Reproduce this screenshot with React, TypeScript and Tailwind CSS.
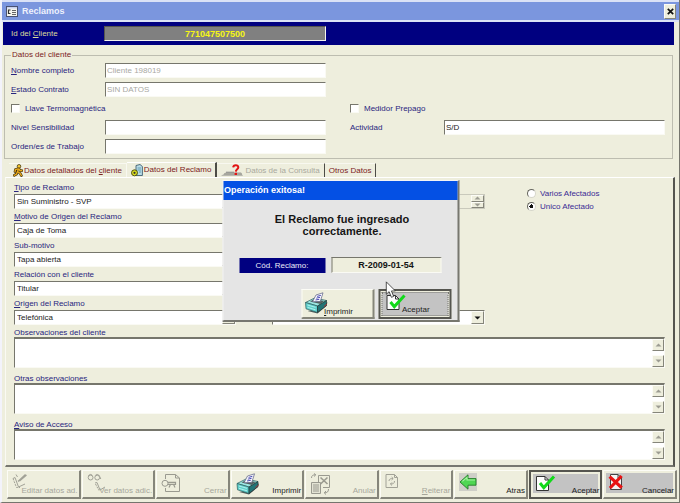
import type { ReactNode } from "react";

const SUNKEN =
  "border border-t-[#76766c] border-l-[#76766c] border-b-[#fafaf4] border-r-[#fafaf4]";
const RAISED =
  "border border-t-[#fcfcf6] border-l-[#fcfcf6] border-b-[#85857a] border-r-[#85857a]";

/* Text with one underlined mnemonic letter, marked by "&". */
function Mnemonic({ text }: { text: string }) {
  const at = text.indexOf("&");
  if (at < 0) return <>{text}</>;
  return (
    <>
      {text.slice(0, at)}
      <span className="underline">{text[at + 1]}</span>
      {text.slice(at + 2)}
    </>
  );
}

function WindowIcon() {
  return (
    <svg width="12" height="11" viewBox="0 0 12 11">
      <rect x="0.5" y="0.5" width="11" height="10" fill="#f4f4ee" stroke="#4a5272" />
      <rect x="1" y="1" width="10" height="1.5" fill="#c9d2ee" />
      <path d="M4.5 4H2.5V7.5H4.5" fill="none" stroke="#333" strokeWidth="1.2" />
      <path d="M6 4.5H10M6 6.5H10M6 8.5H10" stroke="#555" strokeWidth="0.9" />
    </svg>
  );
}

function RunnerIcon() {
  return (
    <svg width="10" height="13" viewBox="0 0 10 13">
      <path d="M6 4L4.5 7.5M5.8 4.6L2.5 5.5L2 7.5M5.8 4.6L7 6.8L8.8 6.5M4.5 7.5L3.5 10L1.2 11.3M4.5 7.5L7 9.2L8.4 11.6" fill="none" stroke="#3a2b08" strokeWidth="2.6" strokeLinecap="round" />
      <path d="M6 4L4.5 7.5M5.8 4.6L2.5 5.5L2 7.5M5.8 4.6L7 6.8L8.8 6.5M4.5 7.5L3.5 10L1.2 11.3M4.5 7.5L7 9.2L8.4 11.6" fill="none" stroke="#e9a91c" strokeWidth="1.4" strokeLinecap="round" />
      <circle cx="6" cy="2.3" r="1.8" fill="#f3c52e" stroke="#3a2b08" strokeWidth="0.7" />
    </svg>
  );
}

function ClaimIcon() {
  return (
    <svg width="12" height="13" viewBox="0 0 12 13">
      <path d="M5 1.5L9 0.5L11.4 2.5V11.5H5Z" fill="#b9dce6" stroke="#3f5f72" strokeWidth="0.9" />
      <path d="M6.5 4H10M6.5 6H10M8 8H10" stroke="#4c8aa4" strokeWidth="0.8" />
      <circle cx="3.5" cy="8.8" r="3" fill="#d9dc1c" stroke="#43450b" strokeWidth="0.9" />
      <circle cx="3.5" cy="8.8" r="1.1" fill="#333" />
    </svg>
  );
}

function QueryIcon() {
  return (
    <svg width="23" height="13" viewBox="0 0 23 13">
      <path d="M5 8.2H20L22 12H0Z" fill="#b9b9b0" />
      <path d="M3 10H21" stroke="#8b8b84" strokeWidth="0.8" />
      <path d="M5 8.2H13" stroke="#777" strokeWidth="0.8" />
      <path d="M12.2 3.4C12.4 0.6 17.4 0.5 17.3 3.4C17.2 5.3 14.9 5.1 14.8 7.6" fill="none" stroke="#e21414" strokeWidth="2" />
      <rect x="13.6" y="8.8" width="2.4" height="2.2" fill="#e21414" />
    </svg>
  );
}

function PrinterIcon() {
  return (
    <svg width="24" height="22" viewBox="0 0 24 22">
      <path d="M3 19L13 21.5L22 14L23 10L18 16Z" fill="#55605f" />
      <path d="M1 10.5L10 6L22 8.5L13 14Z" fill="#9be6e2" stroke="#2d5b5b" strokeWidth="0.7" />
      <path d="M1 10.5L13 14V20.5L1.5 16.8Z" fill="#5fd0cc" stroke="#2d5b5b" strokeWidth="0.7" />
      <path d="M13 14L22 8.5V13.5L13 20.5Z" fill="#237476" stroke="#233" strokeWidth="0.7" />
      <path d="M3 13L11 15.3M3 15.4L11 17.8" stroke="#c6f7f4" strokeWidth="0.8" />
      <path d="M5.5 9.5L16 12L19.5 9L10 7Z" fill="#54615f" />
      <path d="M8 9.8L11.5 3L18.5 0.8L15.8 9.4Z" fill="#fbfbff" stroke="#565a80" strokeWidth="0.7" />
      <path d="M12.6 4.4L16.4 3.3M11.8 6.2L15.6 5.3M11 8L14.8 7.3" stroke="#4b4bb4" strokeWidth="1" />
      <path d="M19.5 14.5L22.5 12" stroke="#a33" strokeWidth="1" />
    </svg>
  );
}

function CheckDocIcon() {
  return (
    <svg width="21" height="18" viewBox="0 0 21 18">
      <path d="M1.5 2.5H10L13.5 6V16.5H1.5Z" fill="#fdfdfd" stroke="#333" />
      <path d="M10 2.5V6H13.5" fill="none" stroke="#333" />
      <path d="M5 9L8.8 13.6L19 2.5" fill="none" stroke="#12d91a" strokeWidth="3" />
    </svg>
  );
}

function CrossDocIcon() {
  return (
    <svg width="16" height="18" viewBox="0 0 16 18">
      <path d="M2.5 1.5H10L13.5 5V16.5H2.5Z" fill="#f4f4f4" stroke="#444" />
      <path d="M10 1.5V5H13.5" fill="none" stroke="#444" />
      <path d="M1.6 3.6L13.8 14.8M13.6 3L2 15" stroke="#e81313" strokeWidth="3.2" />
    </svg>
  );
}

function BackArrowIcon() {
  return (
    <svg width="18" height="18" viewBox="0 0 18 18">
      <rect width="18" height="18" fill="#cfcfc8" />
      <path d="M1 9L9 1.8V5.6H17V12.2H9V16.2Z" fill="#4fd653" stroke="#237a28" strokeWidth="0.9" />
      <path d="M3.4 8.4L8 4.4V7H16" fill="none" stroke="#a6f2a2" strokeWidth="1.1" />
    </svg>
  );
}

function EditIcon() {
  return (
    <svg width="18" height="16" viewBox="0 0 18 16" fill="none" stroke="#a2a297">
      <path d="M1 5.5L3 4.5L6.5 14L13 11" />
      <path d="M1 5.5L4.5 14.5H8" strokeDasharray="2 1" />
      <path d="M6 8.5L13.5 1.5M7.5 8L14.5 2" strokeWidth="1.3" />
      <path d="M4 1.5L5.5 4" />
    </svg>
  );
}

function GlassesIcon() {
  return (
    <svg width="20" height="19" viewBox="0 0 20 19" fill="none" stroke="#a2a297">
      <circle cx="3.6" cy="4.6" r="2.4" />
      <circle cx="10.2" cy="4.6" r="2.4" />
      <path d="M1.4 3.2C2 1 4.6 1 5.4 2.4M8.4 2.4C9 1 11.8 1 12.6 3.4L13.8 6" />
      <path d="M8 10L10 9.5L13 17L18 14" />
      <path d="M8.5 11L12 17.5" strokeDasharray="2 1" />
    </svg>
  );
}

function CloseDocIcon() {
  return (
    <svg width="20" height="20" viewBox="0 0 20 20" fill="none" stroke="#9a9a90">
      <path d="M4.5 6V1.5H14.5L18.5 5V18.5H4.5V15" />
      <path d="M14.5 1.5V5H18.5" />
      <circle cx="4" cy="10.3" r="3" />
      <path d="M7 9.3H14.5V11.3H7M9.5 11.3L8 14.5M12.5 11.3L14 14.5" strokeWidth="1.2" />
    </svg>
  );
}

function CancelDocsIcon() {
  return (
    <svg width="22" height="22" viewBox="0 0 22 22" fill="none" stroke="#9a9a90">
      <path d="M8.5 9V2.5H19.5V14.5H13" />
      <path d="M10.5 4.5L17.5 11M17.5 4.5L10.5 11" strokeWidth="1.6" />
      <path d="M1.5 9.5H10.5V20.5H1.5Z" fill="#e3e3d4" />
      <path d="M3 12H9M3 14H9M3 16H9M3 18H9" />
      <path d="M1.5 5C1.5 2.5 3 1.8 5.5 1.8M4 0.5L5.8 1.8L4 3.5M18.5 16C18.5 19 17 19.8 14.5 19.8M16 18L14.2 19.8L16 21.5" />
    </svg>
  );
}

function RepeatDocIcon() {
  return (
    <svg width="14" height="16" viewBox="0 0 14 16" fill="none" stroke="#a2a297">
      <path d="M1 1.5H9.5L12.5 4.5V14.5H1Z" />
      <path d="M9.5 1.5V4.5H12.5" />
      <path d="M4 8C4 6 5.5 5.5 8 5.5M6.6 4L8.2 5.5L6.6 7M9.5 8C9.5 10.5 8 11 5.5 11M7 9.4L5.4 11L7 12.5" />
    </svg>
  );
}

function Triangle({ down = false, dark = false }: { down?: boolean; dark?: boolean }) {
  return (
    <svg width="7" height="4" viewBox="0 0 7 4">
      <path d={down ? "M0.5 0.5H6.5L3.5 3.5Z" : "M0.5 3.5H6.5L3.5 0.5Z"} fill={dark ? "#111" : "#9c9c92"} />
    </svg>
  );
}

const LABEL = "text-[#29257e]";

function ClientField({ id, label, value, disabled }: { id: string; label: string; value: string; disabled?: boolean }) {
  return (
    <div className="flex h-[15px] items-center">
      <label htmlFor={id} className={`w-[94px] shrink-0 ${LABEL}`}>
        <Mnemonic text={label} />
      </label>
      <input
        id={id}
        defaultValue={value}
        disabled={disabled}
        className={`h-[15px] min-w-0 flex-1 bg-white px-px text-[#222] disabled:text-[#a9a9a3] ${SUNKEN}`}
      />
    </div>
  );
}

function ClientCheck({ label }: { label: string }) {
  return (
    <label className={`flex h-[15px] items-center gap-[5px] ${LABEL}`}>
      <input type="checkbox" className={`size-[9px] appearance-none bg-white ${SUNKEN}`} />
      {label}
    </label>
  );
}

function Combo({ id, label, value, className = "" }: { id: string; label: string; value: string; className?: string }) {
  return (
    <div className={className}>
      <label htmlFor={id} className={`block h-[14px] leading-[15px] ${LABEL}`}>
        <Mnemonic text={label} />
      </label>
      <div className={`relative h-[15px] bg-white ${SUNKEN}`}>
        <select id={id} className="block h-full w-full appearance-none bg-transparent px-[2px] text-[#222]">
          <option>{value}</option>
        </select>
        <span className={`pointer-events-none absolute inset-y-0 right-0 flex w-[13px] items-center justify-center bg-[#eeeedd] ${RAISED}`}>
          <Triangle down dark />
        </span>
      </div>
    </div>
  );
}

function Memo({ id, label }: { id: string; label: string }) {
  return (
    <div>
      <label htmlFor={id} className={`block h-3 leading-[15px] ${LABEL}`}>
        <Mnemonic text={label} />
      </label>
      <div className={`flex h-[31px] border-t-2! bg-white ${SUNKEN}`}>
        <textarea id={id} className="min-w-0 flex-1 resize-none bg-transparent px-[2px]" />
        <div className="flex w-3 flex-col justify-between">
          <button aria-label="Subir" className={`flex h-3 items-center justify-center bg-[#eeeedd] ${RAISED}`}>
            <Triangle />
          </button>
          <button aria-label="Bajar" className={`flex h-3 items-center justify-center bg-[#eeeedd] ${RAISED}`}>
            <Triangle down />
          </button>
        </div>
      </div>
    </div>
  );
}

function Tab({ icon, label, selected, disabled }: { icon?: ReactNode; label: string; selected?: boolean; disabled?: boolean }) {
  return (
    <button
      role="tab"
      aria-selected={!!selected}
      disabled={disabled}
      className={`flex items-center gap-px border-t px-1 text-[#7b2222] disabled:text-[#a9a99e] ${
        selected ? "h-[15px] border-r-2 border-t-white border-r-[#4c4c46]" : "h-[14px] border-r border-t-[#f8f8f0] border-r-[#4c4c46] first:border-r-[#f8f8f0]"
      }`}
    >
      {icon}
      <span>
        <Mnemonic text={label} />
      </span>
    </button>
  );
}

function ToolButton({ icon, label, disabled, shaded, primary }: { icon: ReactNode; label: string; disabled?: boolean; shaded?: boolean; primary?: boolean }) {
  return (
    <button
      disabled={disabled}
      className={`relative flex h-[29px] min-w-0 items-start bg-[#eeeedd] pt-[2px] pr-px pb-px pl-1 text-[#222] disabled:text-[#a6a69b] ${
        primary ? "border-2 border-[#55554f]" : "border border-t-[#fcfcf6] border-l-[#fcfcf6] border-r-2 border-b-2 border-r-[#85857a] border-b-[#85857a]"
      }`}
    >
      {shaded && <span className="absolute inset-x-[2px] top-[2px] bottom-1 bg-[#c3c3c3]" />}
      <span className="relative w-0 shrink-0 [&>svg]:max-w-none">{icon}</span>
      <span className="relative flex-1 self-end text-right whitespace-nowrap">
        <Mnemonic text={label} />
      </span>
    </button>
  );
}

function SuccessDialog() {
  return (
    <div
      role="dialog"
      aria-label="Operación exitosa!"
      className="absolute top-[180px] left-1/2 w-[237px] -translate-x-1/2 border border-t-[#f4f4f4] border-l-[#f4f4f4] border-r-2 border-b-2 border-r-[#77776f] border-b-[#77776f] bg-[#e5e5e5] pb-px"
    >
      <h2 className="h-[19px] bg-[#0450e4] pl-px text-[9px] leading-[19px] font-bold text-white">Operación exitosa!</h2>
      <p className="pt-[13px] pl-1 text-center text-[11px] leading-[12px] font-bold text-[#151515]">
        El Reclamo fue ingresado
        <br />
        correctamente.
      </p>
      <div className="mt-5 flex items-center gap-[6px] px-4">
        <label htmlFor="codigo" className="h-[15px] w-[86px] bg-[#000080] text-center leading-[15px] text-[#ececf8]">
          Cód. Reclamo:
        </label>
        <input
          id="codigo"
          readOnly
          value="R-2009-01-54"
          className={`h-4 min-w-0 flex-1 bg-[#eeeedd] text-center text-[9px] font-bold text-[#151515] ${SUNKEN}`}
        />
      </div>
      <div className="mt-4 flex justify-end gap-1 pr-[6px]">
        <button className="flex h-[30px] w-[73px] items-start border border-t-[#fcfcf6] border-l-[#fcfcf6] border-r-2 border-b-2 border-r-[#85857a] border-b-[#85857a] bg-[#eeeedd] pt-[2px] pl-[2px] text-[#222]">
          <PrinterIcon />
          <span className="-ml-1 self-end">
            <Mnemonic text="&Imprimir" />
          </span>
        </button>
        <button className="flex h-[30px] w-[73px] border-2 border-[#55554f] bg-[#eeeedd] p-px text-[#222]">
          <span className="flex h-full w-full items-start border border-dotted border-[#77776f] bg-[#c3c3c3] pl-[3px]">
            <CheckDocIcon />
            <span className="-ml-1 self-end">Aceptar</span>
          </span>
        </button>
      </div>
      <svg className="absolute top-[100px] left-[161px]" width="13" height="18" viewBox="0 0 13 21">
        <path d="M1 1V15.5L4.3 12.4L7 19L9.6 18L7 11.6H11.6Z" fill="#fff" stroke="#222" strokeWidth="0.9" />
      </svg>
    </div>
  );
}

export default function App() {
  return (
    <div className="relative flex min-h-screen flex-col border-r border-b border-l-2 border-l-[#f3f3fb] border-r-[#75756d] border-b-[#75756d] bg-[#eeeedd] font-['Liberation_Sans',Arial,sans-serif] text-[8px] leading-[10px]">
      <header className="flex h-[22px] items-center justify-between border-t-2 border-b-2 border-[#dbe2f6] bg-[#7b96de] pr-[3px] pl-1">
        <h1 className="flex items-center gap-1 text-[9px] font-bold text-[#eef1fc]">
          <WindowIcon />
          Reclamos
        </h1>
        <button aria-label="Cerrar ventana" className={`flex h-[15px] w-3 items-center justify-center bg-[#eeeedd] ${RAISED}`}>
          <svg width="7" height="7" viewBox="0 0 7 7">
            <path d="M0.8 0.8L6.2 6.2M6.2 0.8L0.8 6.2" stroke="#111" strokeWidth="1.7" />
          </svg>
        </button>
      </header>

      <div className="mr-[5px] ml-px flex h-[23px] items-center bg-[#000080] pl-2">
        <label htmlFor="idcliente" className="w-[93px] text-[#dcdc9c]">
          <Mnemonic text="Id del &Cliente" />
        </label>
        <input
          id="idcliente"
          readOnly
          value="771047507500"
          className="h-[15px] w-[222px] border border-t-[#55554f] border-l-[#55554f] border-r-[#f4f4ee] border-b-[#f4f4ee] bg-[#808080] text-center text-[9px] font-bold text-[#f6f614]"
        />
      </div>

      <fieldset className="mt-[5px] mr-[6px] ml-[2px] border border-[#bdbdb0] pt-[3px] pr-[7px] pb-1 pl-[6px]">
        <legend className="px-px text-[#7b2222]">Datos del cliente</legend>
        <div className="grid grid-cols-2 gap-x-6">
          <div className="flex flex-col gap-1">
            <ClientField id="nombre" label="&Nombre completo" value="Cliente 198019" disabled />
            <ClientField id="estado" label="&Estado Contrato" value="SIN DATOS" disabled />
            <ClientCheck label="Llave Termomagnética" />
            <ClientField id="nivel" label="Nivel Sensibilidad" value="" />
            <ClientField id="orden" label="Orden/es de Trabajo" value="" />
          </div>
          <div className="flex flex-col gap-1 pt-[38px]">
            <ClientCheck label="Medidor Prepago" />
            <ClientField id="actividad" label="Actividad" value="S/D" />
          </div>
        </div>
      </fieldset>

      <div role="tablist" className="mt-[3px] ml-[7px] flex h-[15px] items-end">
        <Tab icon={<RunnerIcon />} label="Datos detallados del &cliente" />
        <Tab icon={<ClaimIcon />} label="Datos del Reclamo" selected />
        <Tab icon={<QueryIcon />} label="Datos de la Consulta" disabled />
        <Tab label="Otros Datos" />
      </div>

      <main className="mr-1 ml-[3px] border-t border-r-2 border-b-2 border-l border-t-white border-l-[#fafaf4] border-r-[#55554f] border-b-[#77776f] pt-[2px] pr-2 pb-[5px] pl-2">
        <div className="grid grid-cols-[222fr_213fr_144fr] gap-x-9">
          <Combo id="tipo" label="&Tipo de Reclamo" value="Sin Suministro - SVP" className="col-start-1" />
          <div className="col-start-2 row-start-1 pt-[14px]">
            <div className="flex h-[15px] justify-end border border-[#c9c9bc]">
              <div className="flex w-[13px] flex-col">
                <button aria-label="Aumentar" className={`flex flex-1 items-center justify-center ${RAISED}`}>
                  <Triangle />
                </button>
                <button aria-label="Disminuir" className={`flex flex-1 items-center justify-center ${RAISED}`}>
                  <Triangle down />
                </button>
              </div>
            </div>
          </div>
          <div className="col-start-3 row-span-2 row-start-1 flex flex-col pt-[7px] pl-[6px]">
            {["Varios Afectados", "Unico Afectado"].map((name, i) => (
              <label key={name} className="flex h-[13px] items-center gap-1 text-[#3a2a94]">
                <input
                  type="radio"
                  name="afectados"
                  defaultChecked={i === 1}
                  className="size-[9px] appearance-none rounded-full border border-t-[#66665e] border-r-[#d6d6ca] border-b-[#d6d6ca] border-l-[#66665e] bg-white checked:bg-[radial-gradient(#111_0_2px,#fff_2px)]"
                />
                {name}
              </label>
            ))}
          </div>
          <Combo id="motivo" label="&Motivo de Origen del Reclamo" value="Caja de Toma" className="col-start-1" />
          <Combo id="submotivo" label="Sub-motivo" value="Tapa abierta" className="col-start-1" />
          <Combo id="relacion" label="Relación con el cliente" value="Titular" className="col-start-1" />
          <Combo id="origen" label="&Origen del Reclamo" value="Telefónica" className="col-start-1" />
          <Combo id="detalle" label="" value="" className="col-start-2 row-start-5" />
        </div>
        <div className="flex flex-col gap-[3px]">
          <Memo id="obs" label="Observaciones del cliente" />
          <Memo id="otras" label="Otras observaciones" />
          <Memo id="aviso" label="&Aviso de Acceso" />
        </div>
      </main>

      <footer className="grid grid-cols-9 gap-px pt-[3px] pr-[2px] pb-[2px] pl-[5px]">
        <ToolButton icon={<EditIcon />} label="Editar datos ad." disabled />
        <ToolButton icon={<GlassesIcon />} label="Ver datos adic." disabled />
        <ToolButton icon={<CloseDocIcon />} label="Cerrar" disabled />
        <ToolButton icon={<PrinterIcon />} label="Imprimir" />
        <ToolButton icon={<CancelDocsIcon />} label="Anular" disabled />
        <ToolButton icon={<RepeatDocIcon />} label="&Reiterar" disabled />
        <ToolButton icon={<BackArrowIcon />} label="Atras" />
        <ToolButton icon={<CheckDocIcon />} label="Aceptar" shaded primary />
        <ToolButton icon={<CrossDocIcon />} label="Cancelar" shaded />
      </footer>

      <SuccessDialog />
    </div>
  );
}
